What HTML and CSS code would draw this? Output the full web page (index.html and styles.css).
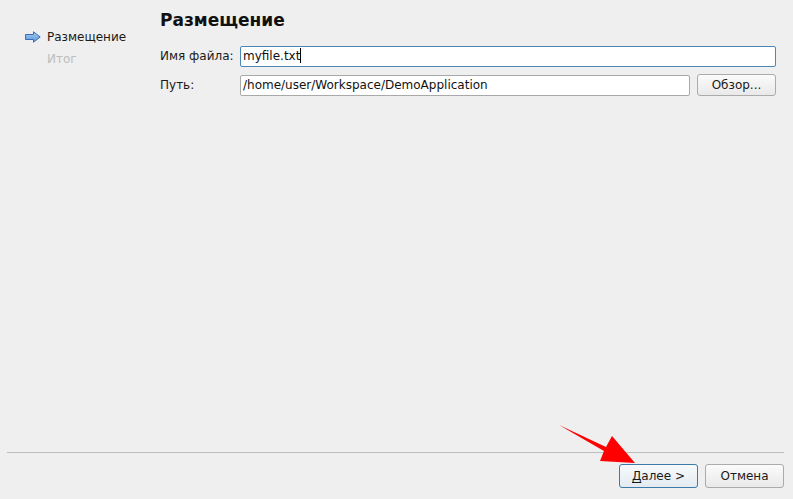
FILE: index.html
```html
<!DOCTYPE html>
<html lang="ru">
<head>
<meta charset="utf-8">
<title>Размещение</title>
<link rel="stylesheet" href="styles.css">
</head>
<body>
<div class="page">
  <div class="wizard">
    <div class="side">
      <div class="step current">
        <svg class="step-icon" width="16" height="12" viewBox="0 0 16 12">
          <defs>
            <linearGradient id="ag" x1="0" y1="0" x2="0" y2="1">
              <stop offset="0" stop-color="#a9cdf3"/>
              <stop offset="1" stop-color="#5b95d8"/>
            </linearGradient>
          </defs>
          <path d="M0.5 3.5 H8.5 V0.8 L15.2 6 L8.5 11.2 V8.5 H0.5 Z" fill="url(#ag)" stroke="#3a6fb5" stroke-width="1" stroke-linejoin="round"/>
        </svg>
        <span>Размещение</span>
      </div>
      <div class="step todo">
        <span class="step-icon"></span>
        <span>Итог</span>
      </div>
    </div>
    <div class="content">
      <h1 class="title">Размещение</h1>
      <div class="form">
        <label class="lbl">Имя файла:</label>
        <div class="field focused span2">myfile.txt<span class="caret"></span></div>
        <label class="lbl">Путь:</label>
        <div class="field">/home/user/Workspace/DemoApplication</div>
        <button class="btn browse">Обзор...</button>
      </div>
    </div>
  </div>
  <div class="footer">
    <button class="btn default"><u>Д</u>алее &gt;</button>
    <button class="btn">Отмена</button>
  </div>
  <svg class="annot" width="793" height="499" viewBox="0 0 793 499">
    <polygon points="559,425 606,447 612,436 635,463 600,461 604,451" fill="#ff0000"/>
  </svg>
</div>
</body>
</html>
```

FILE: styles.css
```css
html, body {
  margin: 0;
  padding: 0;
  background: #efefef;
}
body {
  font-family: "DejaVu Sans", "Noto Sans", sans-serif;
  font-size: 12px;
  color: #1a1a1a;
}
.page {
  position: relative;
  width: 793px;
  height: 499px;
  display: flex;
  flex-direction: column;
  overflow: hidden;
}
.wizard {
  flex: 1;
  display: flex;
}
.side {
  width: 160px;
  box-sizing: border-box;
  padding: 26px 0 0 25px;
  display: flex;
  flex-direction: column;
}
.step {
  height: 22px;
  display: flex;
  align-items: center;
  gap: 6px;
}
.step-icon {
  width: 16px;
  height: 12px;
  flex: none;
  display: block;
}
.step.todo {
  color: #bdbdbd;
}
.content {
  flex: 1;
  padding: 10px 17px 0 0;
}
.title {
  margin: 0 0 16px;
  font-size: 17px;
  line-height: 20px;
  font-weight: bold;
  color: #111;
}
.form {
  display: grid;
  grid-template-columns: 80px 1fr auto;
  column-gap: 7px;
  row-gap: 7px;
  align-items: center;
}
.lbl {
  line-height: 21px;
}
.field {
  height: 21px;
  box-sizing: border-box;
  border: 1px solid #a9a9a9;
  border-radius: 2px;
  background: #fff;
  padding: 0 2px;
  line-height: 19px;
  font-size: 12px;
  color: #111;
  white-space: nowrap;
  overflow: hidden;
  margin-left: -7px;
}
.field.span2 {
  grid-column: 2 / 4;
}
.field.focused {
  border-color: #4a86b8;
}
.caret {
  display: inline-block;
  width: 1px;
  height: 15px;
  background: #000;
  vertical-align: -3px;
}
.btn {
  font-family: "DejaVu Sans", "Noto Sans", sans-serif;
  font-size: 12px;
  color: #1a1a1a;
  width: 79px;
  height: 23px;
  box-sizing: border-box;
  border: 1px solid #ababab;
  border-radius: 3px;
  background: linear-gradient(#fbfbfb, #e9e9e9);
  padding: 0;
  line-height: 21px;
}
.btn.browse {
  height: 22px;
}
.btn.default {
  border-color: #3d7aa8;
  background: linear-gradient(#f7fafc, #e2ebf1);
}
.btn u {
  text-decoration-thickness: 1px;
  text-underline-offset: 2px;
}
.footer {
  margin: 0 9px 0 7px;
  border-top: 1px solid #bcbcbc;
  padding: 11px 0 11px;
  display: flex;
  justify-content: flex-end;
  gap: 7px;
}
.footer .btn {
  height: 24px;
  line-height: 22px;
}
.annot {
  position: absolute;
  left: 0;
  top: 0;
  pointer-events: none;
}
```
